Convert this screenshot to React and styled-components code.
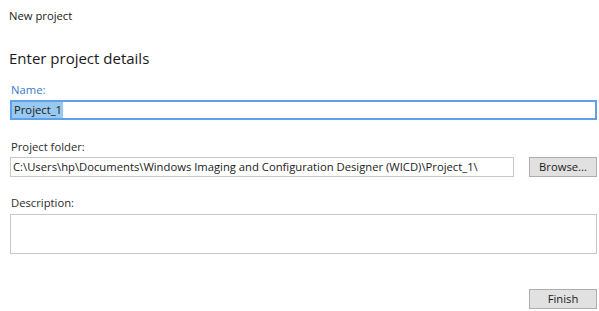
import React from "react";
import styled, { createGlobalStyle } from "styled-components";

const Global = createGlobalStyle`
  html, body { margin: 0; padding: 0; background: #ffffff; }
  body { font-family: "Open Sans", "Noto Sans", sans-serif; color: #1e1e1e; }
  * { box-sizing: border-box; }
`;

const Page = styled.div`
  width: 599px;
  height: 311px;
  padding: 0 2px 0 10px;
  background: #fff;
  overflow: hidden;
`;

const WindowTitle = styled.div`
  font-size: 11.25px;
  line-height: 16px;
  margin-top: 8px;
  margin-left: -1px;
  color: #1a1a1a;
`;

const Heading = styled.h1`
  font-size: 15px;
  font-weight: 400;
  line-height: 20px;
  margin: 24px 0 0 -1px;
  color: #1a1a1a;
`;

const Label = styled.label`
  display: block;
  font-size: 11.25px;
  line-height: 16px;
  margin: ${(p) => p.$mt || 0}px 0 ${(p) => p.$mb || 2}px 1px;
  color: ${(p) => (p.$active ? "#3a78c8" : "#2b2b2b")};
`;

const Row = styled.div`
  display: flex;
  align-items: flex-start;
  gap: 15px;
`;

const TextBox = styled.div`
  flex: 1 1 auto;
  height: ${(p) => p.$h || 20}px;
  border: ${(p) => (p.$focus ? "2px solid #5fa0ee" : "1px solid #c8c8c8")};
  background: #fff;
  font-size: 11.25px;
  line-height: 16px;
  padding: ${(p) => (p.$focus ? "0 0" : "1px 2px")};
  white-space: nowrap;
  overflow: hidden;
  color: #1a1a1a;
`;

const Selected = styled.span`
  background: #99c9ef;
  padding: 0 1px 0 2px;
  display: inline-block;
  line-height: 16px;
`;

const Button = styled.button`
  width: 68px;
  height: 20px;
  border: 1px solid #adadad;
  background: #e1e1e1;
  font-family: inherit;
  font-size: 11.25px;
  line-height: 16px;
  color: #1a1a1a;
  padding: 0;
  flex: none;
`;

const Footer = styled.div`
  margin-top: 35px;
  display: flex;
  justify-content: flex-end;
`;

export default function App() {
  return (
    <>
      <Global />
      <Page>
        <WindowTitle>New project</WindowTitle>
        <Heading>Enter project details</Heading>
        <Label $active $mt={14}>Name:</Label>
        <TextBox $focus>
          <Selected>Project_1</Selected>
        </TextBox>
        <Label $mt={19}>Project folder:</Label>
        <Row>
          <TextBox>
            C:\Users\hp\Documents\Windows Imaging and Configuration Designer (WICD)\Project_1\
          </TextBox>
          <Button>Browse...</Button>
        </Row>
        <Label $mt={18} $mb={3}>Description:</Label>
        <TextBox $h={40} />
        <Footer>
          <Button>Finish</Button>
        </Footer>
      </Page>
    </>
  );
}
